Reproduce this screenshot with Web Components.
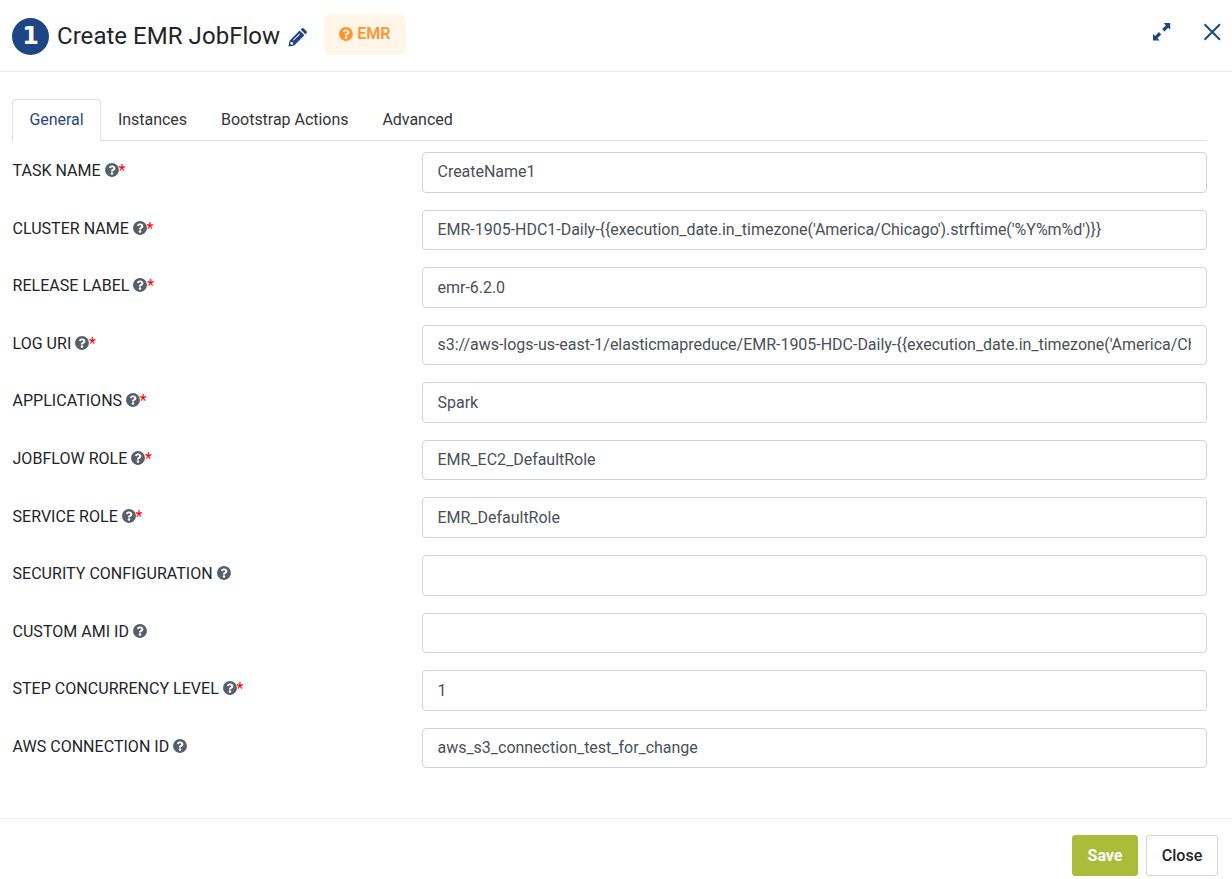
<!DOCTYPE html>
<html lang="en">
<head>
<meta charset="utf-8">
<title>Create EMR JobFlow</title>
<style>
html,body{margin:0;height:100%;background:#fff}
body{font-family:Roboto,sans-serif;font-size:16px;color:#212529;overflow:hidden}
</style>
</head>
<body>
<task-dialog>
  <dialog-header slot="header" step="1" badge="EMR">Create EMR JobFlow</dialog-header>
  <tab-bar slot="tabs">
    <tab-item active>General</tab-item>
    <tab-item>Instances</tab-item>
    <tab-item>Bootstrap Actions</tab-item>
    <tab-item>Advanced</tab-item>
  </tab-bar>
  <form-row label="TASK NAME" required>CreateName1</form-row>
  <form-row label="CLUSTER NAME" required>EMR-1905-HDC1-Daily-{{execution_date.in_timezone('America/Chicago').strftime('%Y%m%d')}}</form-row>
  <form-row label="RELEASE LABEL" required>emr-6.2.0</form-row>
  <form-row label="LOG URI" required>s3://aws-logs-us-east-1/elasticmapreduce/EMR-1905-HDC-Daily-{{execution_date.in_timezone('America/Ch</form-row>
  <form-row label="APPLICATIONS" required>Spark</form-row>
  <form-row label="JOBFLOW ROLE" required>EMR_EC2_DefaultRole</form-row>
  <form-row label="SERVICE ROLE" required>EMR_DefaultRole</form-row>
  <form-row label="SECURITY CONFIGURATION"></form-row>
  <form-row label="CUSTOM AMI ID"></form-row>
  <form-row label="STEP CONCURRENCY LEVEL" required>1</form-row>
  <form-row label="AWS CONNECTION ID">aws_s3_connection_test_for_change</form-row>
  <action-button slot="footer" primary>Save</action-button>
  <action-button slot="footer">Close</action-button>
</task-dialog>
<script>
const define = (name, markup, setup) => {
  const template = document.createElement('template');
  template.innerHTML = markup;
  customElements.define(name, class extends HTMLElement {
    constructor() {
      super();
      this.attachShadow({mode: 'open'}).append(template.content.cloneNode(true));
    }
    connectedCallback() { if (setup) setup(this, this.shadowRoot); }
  });
};

define('help-icon', `<style>
:host{display:inline-block;width:14px;height:14px}
svg{display:block;width:100%;height:100%;fill:currentColor}
</style><svg viewBox="4 4 504 504"><path d="M504 256c0 137-111 248-248 248S8 393 8 256C8 119.100 119 8 256 8s248 111.100 248 248zM262.700 90c-54.500 0-89.300 23-116.500 63.800-3.500 5.300-2.400 12.400 2.700 16.300l34.700 26.300c5.200 3.900 12.600 3 16.700-2.100 17.900-22.700 30.100-35.800 57.300-35.800 20.400 0 45.700 13.100 45.700 33 0 15-12.400 22.700-32.500 34C247.100 238.500 216 254.900 216 296v4c0 6.600 5.400 12 12 12h56c6.600 0 12-5.400 12-12v-1.300c0-28.500 83.200-29.600 83.200-106.700 0-58-60.200-102-116.500-102zM256 338c-25.400 0-46 20.600-46 46s20.600 46 46 46 46-20.600 46-46-20.600-46-46-46z"/></svg>`);

define('dialog-header', `<style>
:host{display:flex;height:71px;box-sizing:content-box;border-bottom:1px solid #e9e9ec;align-items:flex-start;color:#212529}
.step{width:37px;height:37px;border-radius:50%;background:#1e4684;color:#fff;font:bold 24px/37px "DejaVu Sans",sans-serif;text-align:center;margin:18px 8px 0 12px}
h1{font-size:24px;line-height:36px;font-weight:400;margin:18px 0 0;white-space:nowrap;letter-spacing:.04px}
.pencil{width:19px;height:19px;margin:28px 0 0 8px;fill:#1e4684}
.badge{display:flex;align-items:center;box-sizing:border-box;width:82px;height:41px;margin:14px 0 0 17px;padding:0 0 2px 15px;gap:4px;border-radius:7px;background:#fff5e8;color:#ff9430;font-weight:600}
.tools{display:flex;margin-left:auto}
.expand{width:18px;height:18px;margin:23px 32px 0 0;fill:#1e4684}
.close{width:18px;height:18px;margin:23px 11px 0 0;stroke:#1e4684;stroke-width:2;fill:none}
</style>
<div class="step"></div><h1><slot></slot></h1>
<svg class="pencil" viewBox="0 0 19 19"><path fill-rule="evenodd" d="M0.400 18.600L1.500 12.800L11.700 2.600L16.400 7.300L6.200 17.500ZM12.700 1.600L13.800 0.500Q14.800-.3 15.800.5L18.500 3.200Q19.300 4.200 18.500 5.200L17.400 6.300ZM2.700 13.700L2.200 15.500L3.500 16.800L5.300 16.300L4.900 14.500ZM5 12L5.600 12.600L12 6.200L11.400 5.600Z"/></svg>
<div class="badge"><help-icon></help-icon><span></span></div>
<div class="tools">
<svg class="expand" viewBox="0 0 18 18"><path d="M10.800 0H17.200V6.700L15.200 4.700L11.500 8.400L9.200 6.100L12.900 2.400ZM6.700 17.500H0V10.800L2.100 12.900L5.900 9.100L8.200 11.400L4.400 15.200Z"/></svg>
<svg class="close" viewBox="0 0 18 18"><path d="M1.500 1.300L17 16.800M17 1.300L1.500 16.800"/></svg>
</div>`, (el, root) => {
  root.querySelector('.step').textContent = el.getAttribute('step');
  root.querySelector('.badge span').textContent = el.getAttribute('badge');
});

define('tab-bar', `<style>
:host{display:flex;margin:27px 25px 0 12px;height:41px;border-bottom:1px solid #dbdee2}
</style><slot></slot>`);

define('tab-item', `<style>
:host{display:block;box-sizing:border-box;height:41px;padding:0 16px;border:1px solid transparent;border-bottom:0;line-height:39px;color:#333538;white-space:nowrap;letter-spacing:-.03px}
:host([active]){height:42px;padding:0 16.400px;color:#1e4684;background:#fff;border-color:#dbdee2;border-radius:4px 4px 0 0}
</style><slot></slot>`);

define('form-row', `<style>
:host{display:grid;grid-template-columns:409.500px 785px;height:57.570px;align-items:start}
.label{display:flex;align-items:center;line-height:24px;margin-top:7.200px;color:#212529;white-space:nowrap}
.name{letter-spacing:.03px}
help-icon{margin:0 0 2px 4px;color:#56606b}
.star{color:#f00;margin-left:-.3px}
.field{box-sizing:border-box;height:40.670px;border:1px solid #ced4da;border-radius:4px;padding:.470px 15px 0 14.500px;line-height:38px;color:#495057;letter-spacing:-.02px}
.value{overflow:hidden;white-space:nowrap;height:38px}
</style>
<div class="label"><span class="name"></span><help-icon></help-icon></div>
<div class="field"><div class="value"><slot></slot></div></div>`, (el, root) => {
  root.querySelector('.name').textContent = el.getAttribute('label');
  if (el.hasAttribute('required')) {
    const star = document.createElement('span');
    star.className = 'star';
    star.textContent = '*';
    root.querySelector('.label').append(star);
  }
});

define('action-button', `<style>
:host{display:block;box-sizing:border-box;width:72px;height:41px;border:1px solid #ced4da;border-radius:3px;line-height:39px;text-align:center;font-weight:500;color:#212529;background:#fff}
:host([primary]){width:66px;background:#a9bd3a;border-color:#a9bd3a;color:#fff;font-weight:700}
</style><slot></slot>`);

define('task-dialog', `<style>
:host{display:flex;flex-direction:column;height:879px;width:1232px}
.body{padding:11px 0 0 12.500px;flex:1}
footer{display:flex;justify-content:flex-end;gap:8px;box-sizing:border-box;height:61px;padding:16px 14px 0 0;border-top:1px solid #e9e9ec}
</style>
<slot name="header"></slot><slot name="tabs"></slot>
<div class="body"><slot></slot></div>
<footer><slot name="footer"></slot></footer>`);
</script>
</body>
</html>
